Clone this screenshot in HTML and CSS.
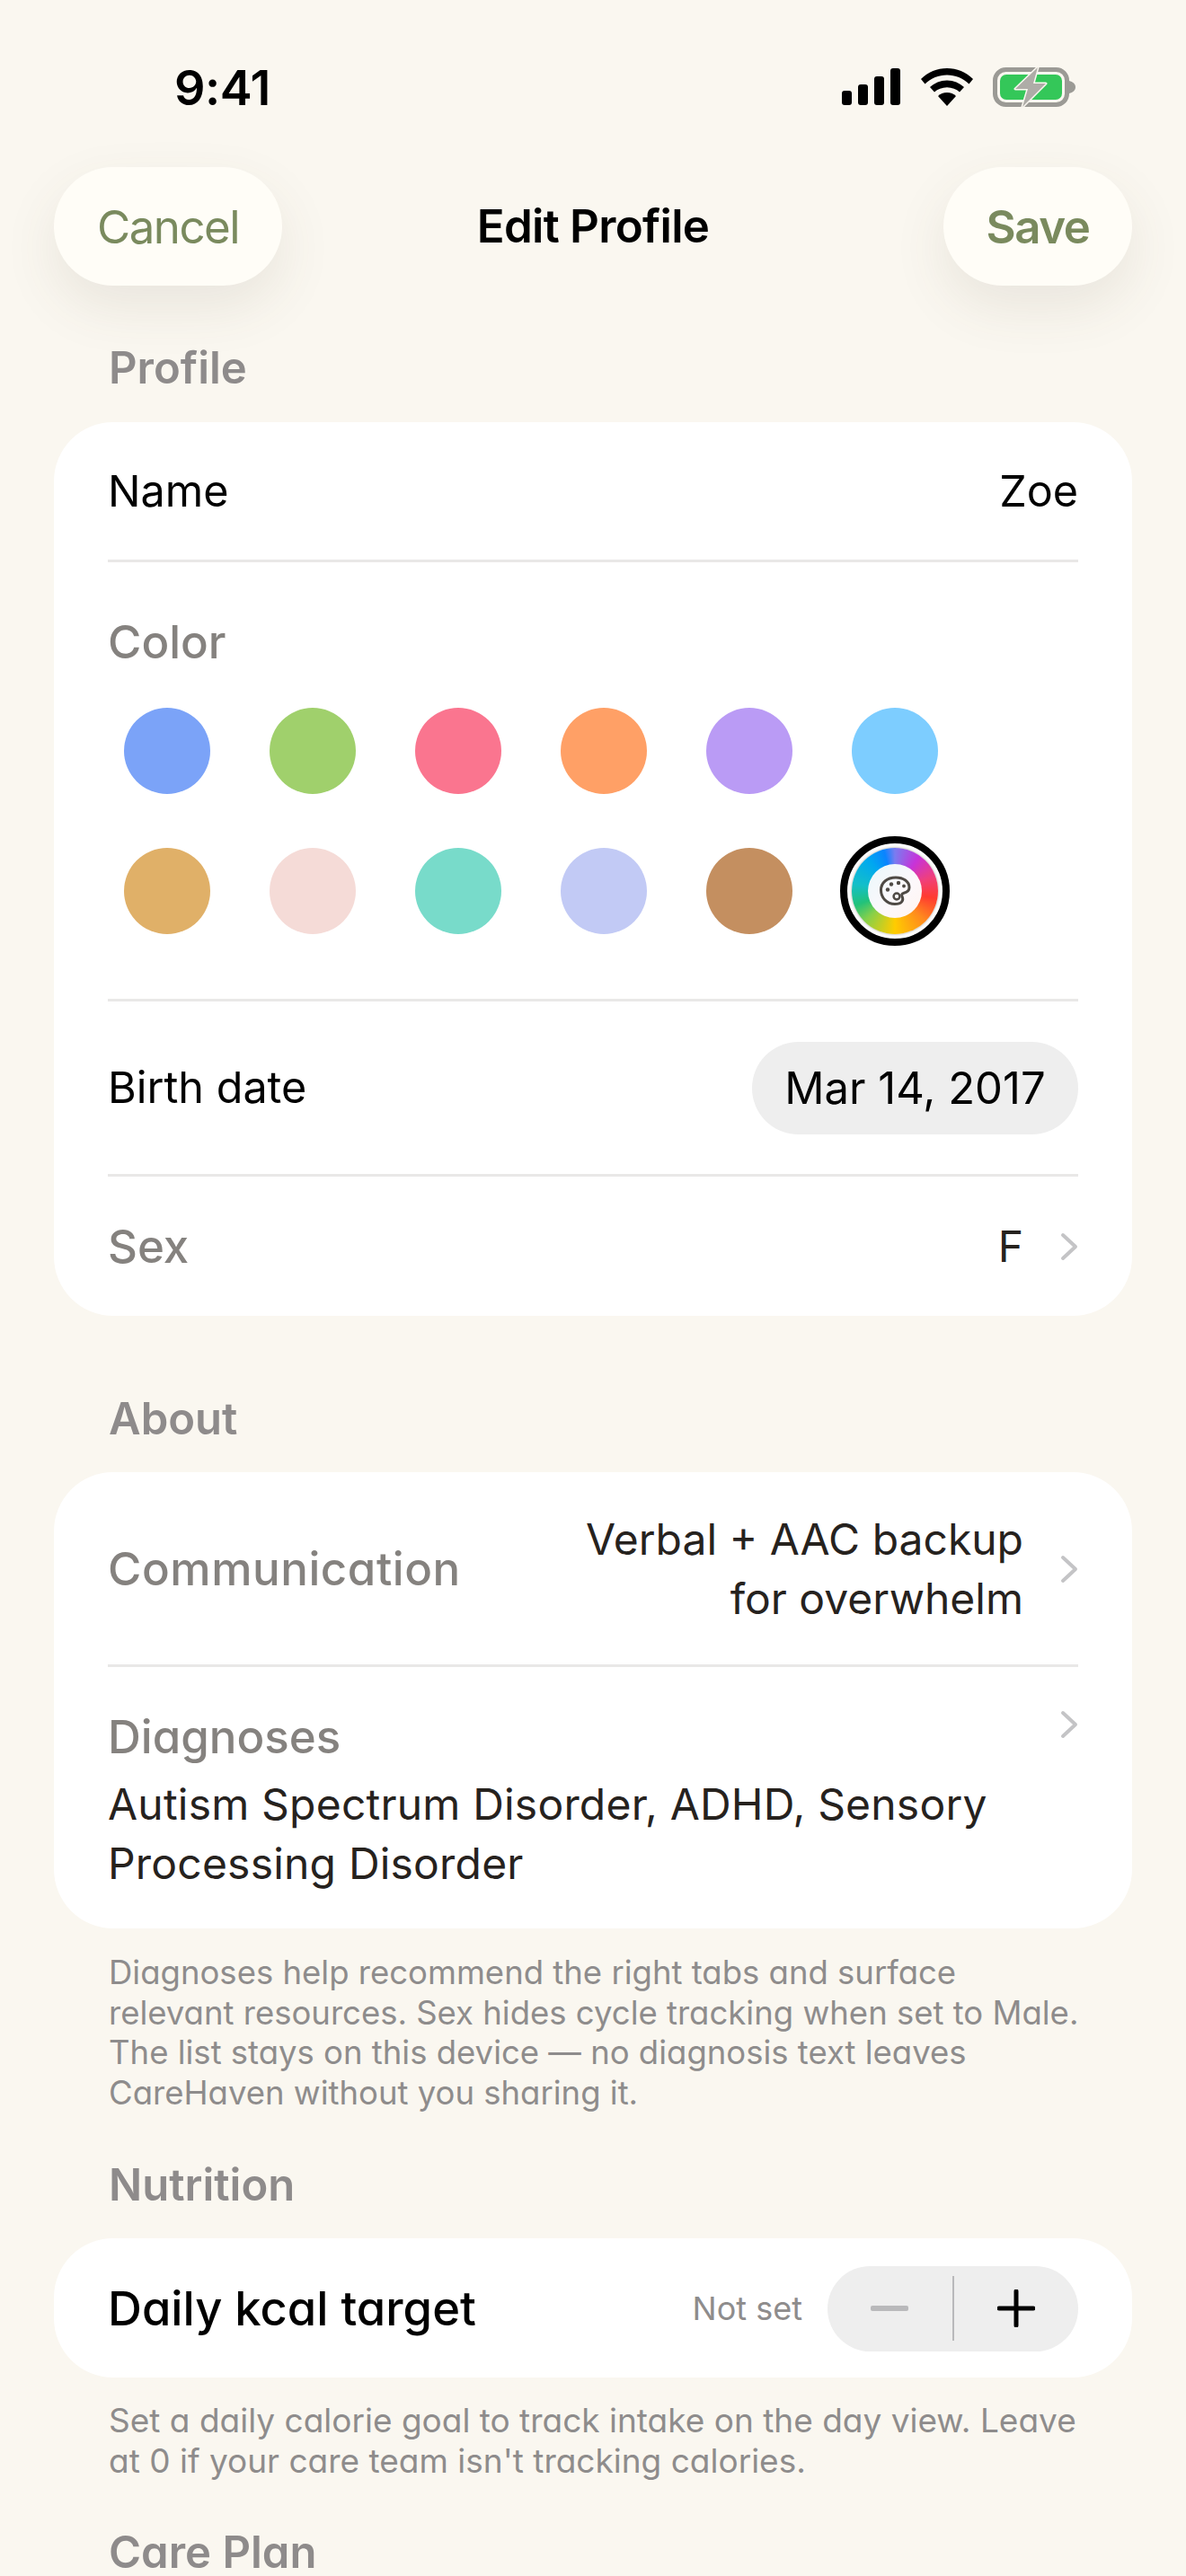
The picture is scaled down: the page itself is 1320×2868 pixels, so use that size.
FILE: index.html
```html
<!DOCTYPE html>
<html lang="en">
<head>
<meta charset="utf-8">
<title>Edit Profile</title>
<link rel="stylesheet" href="styles.css">
</head>
<body>
<main class="screen">
  <header class="status">
    <span class="time">9:41</span>
    <div class="status-icons">
      <svg class="signal" width="65" height="41" viewBox="0 0 65 41"><rect x="0" y="25" width="11" height="16" rx="3"/><rect x="18" y="18" width="11" height="23" rx="3"/><rect x="36" y="9" width="11" height="32" rx="3"/><rect x="54" y="0" width="11" height="41" rx="3"/></svg>
      <svg class="wifi" width="58" height="42" viewBox="0 0 58 42"><path d="M29 0C18 0 8 4 0 12l4.500 5.500C11 11 20 7.500 29 7.500S47 11 53.500 17.500L58 12C50 4 40 0 29 0z"/><path d="M29 13.500c-7.500 0-14 3-19 7.500l5 5.500c3.500-3.200 8.500-5.300 14-5.300s10.500 2.100 14 5.300l5-5.500c-5-4.500-11.500-7.500-19-7.500z"/><path d="M29 27c-4 0-7.500 1.500-10 4l10 11 10-11c-2.500-2.500-6-4-10-4z"/></svg>
      <svg class="battery" width="92" height="46" viewBox="0 0 92 46"><rect x="2.500" y="3.500" width="80" height="39" rx="12" fill="none" stroke="#9b9a95" stroke-width="5"/><rect x="8" y="9" width="69" height="28" rx="7" fill="#34c759"/><path d="M85 16c4 1 7 3.500 7 7s-3 6-7 7z" fill="#9b9a95"/><path d="M50 1 25 25h14l-6 20 26-26H45z" fill="#aeaca7" stroke="#faf7f0" stroke-width="3" stroke-linejoin="round" paint-order="stroke"/></svg>
    </div>
  </header>

  <nav class="nav">
    <button class="nav-btn nav-cancel">Cancel</button>
    <h1 class="nav-title">Edit Profile</h1>
    <button class="nav-btn nav-save">Save</button>
  </nav>

  <h2 class="section-label first">Profile</h2>
  <section class="card">
    <div class="row row-name">
      <span class="text-strong">Name</span>
      <span class="text-strong">Zoe</span>
    </div>
    <div class="color-block">
      <div class="label-round color-label">Color</div>
      <div class="swatches">
        <span class="swatch c1"></span><span class="swatch c2"></span><span class="swatch c3"></span><span class="swatch c4"></span><span class="swatch c5"></span><span class="swatch c6"></span>
        <span class="swatch c7"></span><span class="swatch c8"></span><span class="swatch c9"></span><span class="swatch c10"></span><span class="swatch c11"></span>
        <span class="swatch-custom">
          <span class="rainbow">
            <span class="rainbow-core">
              <svg width="36" height="36" viewBox="0 0 36 36" fill="none" stroke="#4f4a45" stroke-width="3"><path d="M2.500 17C2.500 9 9 3 19 3c8.500 0 15 4.500 15 11 0 4-3 5.500-6 6.200-2.500.6-2.800 2.200-1.800 4.300 1.500 3.500 0 8-8.200 8C8.500 32.500 2.500 25 2.500 17z"/><circle cx="20" cy="24" r="3.400" stroke-width="2.500"/><circle cx="10" cy="16.500" r="2.200" fill="#4f4a45" stroke="none"/><circle cx="14" cy="10.500" r="2.200" fill="#4f4a45" stroke="none"/><circle cx="22" cy="9" r="2.200" fill="#4f4a45" stroke="none"/><circle cx="28" cy="12.500" r="1.900" fill="#4f4a45" stroke="none"/></svg>
            </span>
          </span>
        </span>
      </div>
    </div>
    <div class="row row-birth">
      <span class="text-strong">Birth date</span>
      <span class="date-pill">Mar 14, 2017</span>
    </div>
    <div class="row row-sex">
      <span class="label-round">Sex</span>
      <span class="value-wrap">
        <span class="text-value">F</span>
        <svg class="chev" width="20" height="32" viewBox="0 0 20 32"><path d="M3 3l14 13L3 29"/></svg>
      </span>
    </div>
  </section>

  <h2 class="section-label about">About</h2>
  <section class="card">
    <div class="row row-comm">
      <span class="label-round label-wide">Communication</span>
      <span class="value-wrap">
        <span class="text-value multi">Verbal + AAC backup<br>for overwhelm</span>
        <svg class="chev" width="20" height="32" viewBox="0 0 20 32"><path d="M3 3l14 13L3 29"/></svg>
      </span>
    </div>
    <div class="diag">
      <div class="diag-head">
        <span class="label-round">Diagnoses</span>
        <svg class="chev" width="20" height="32" viewBox="0 0 20 32"><path d="M3 3l14 13L3 29"/></svg>
      </div>
      <p class="text-value diag-text">Autism Spectrum Disorder, ADHD, Sensory Processing Disorder</p>
    </div>
  </section>
  <p class="note note-about">Diagnoses help recommend the right tabs and surface<br>relevant resources. Sex hides cycle tracking when set to Male.<br>The list stays on this device — no diagnosis text leaves<br>CareHaven without you sharing it.</p>

  <h2 class="section-label tight">Nutrition</h2>
  <section class="card">
    <div class="row row-kcal">
      <span class="kcal-title">Daily kcal target</span>
      <div class="kcal-right">
        <span class="not-set">Not set</span>
        <div class="stepper">
          <span class="step"><svg width="42" height="42" viewBox="0 0 42 42"><rect x="0" y="18" width="42" height="6" rx="2" fill="#b9b9bb"/></svg></span>
          <span class="step-sep"></span>
          <span class="step"><svg width="42" height="42" viewBox="0 0 42 42"><path d="M21 2v38M2 21h38" stroke="#000" stroke-width="5" stroke-linecap="round" fill="none"/></svg></span>
        </div>
      </div>
    </div>
  </section>
  <p class="note note-kcal">Set a daily calorie goal to track intake on the day view. Leave at 0 if your care team isn't tracking calories.</p>

  <h2 class="section-label tight2">Care Plan</h2>
</main>
</body>
</html>
```

FILE: styles.css
```css
* { box-sizing: border-box; margin: 0; padding: 0; }
html, body { height: 2868px; overflow: hidden; }
body { background: #faf7f0; font-family: Inter, "Liberation Sans", sans-serif; color: #000; }
.screen { width: 1320px; height: 2868px; overflow: hidden; padding: 0 60px; }

.status { height: 186px; display: flex; justify-content: space-between; align-items: flex-start; padding: 66px 63px 0 134px; }
.time { font-size: 54px; font-weight: 600; line-height: 64px; letter-spacing: -.5px; }
.status-icons { display: flex; align-items: flex-start; gap: 23px; padding: 10px 0 0; }
.signal { fill: #000; }
.wifi { fill: #000; }
.battery { margin-top: -2px; margin-left: -1px; }

.nav { display: grid; grid-template-columns: 1fr auto 1fr; align-items: center; height: 132px; }
.nav-btn { height: 132px; border: 0; border-radius: 66px; background: #fffdf7; font: inherit; font-size: 51px; letter-spacing: -1.5px; padding: 0; box-shadow: 0 24px 60px rgba(90, 80, 60, .1); color: #7a8a5e; }
.nav-cancel { width: 254px; justify-self: start; }
.nav-save { width: 210px; font-weight: 600; justify-self: end; }
.nav-title { font-size: 51px; font-weight: 600; line-height: 60px; letter-spacing: -.7px; }

.section-label { height: 60px; line-height: 60px; font-size: 49px; font-weight: 600; color: #8e8b8b; padding-left: 61px; margin-top: 83px; margin-bottom: 31px; font-feature-settings: "cv11" 1; }
.section-label.first { margin-top: 62px; margin-bottom: 30px; }
.section-label.about { margin-top: 85px; margin-bottom: 29px; }
.section-label.tight { margin-top: 49px; margin-bottom: 29px; }
.section-label.tight2 { margin-top: 52px; margin-bottom: 0; height: 53px; line-height: 53px; }

.card { background: #fff; border-radius: 66px; padding: 0 60px; }
.row { display: flex; justify-content: space-between; align-items: center; border-bottom: 3px solid #e9e8e7; }
.row-name { height: 156px; padding-top: 1px; }
.row-birth { height: 195px; }
.row-sex, .row-kcal { border-bottom: 0; }
.row-sex { height: 155px; }
.text-strong { font-size: 48.500px; line-height: 60px; }
.text-value { font-size: 48px; line-height: 66px; color: #26221e; }
.label-round { font-size: 51px; line-height: 60px; font-weight: 500; color: #85827f; font-feature-settings: "cv11" 1; }
.label-wide { letter-spacing: .55px; }

.color-block { height: 489px; padding-top: 59px; border-bottom: 3px solid #e9e8e7; }
.swatches { display: grid; grid-template-columns: repeat(6, 96px); column-gap: 66px; row-gap: 60px; padding: 43px 0 0 18px; align-items: center; justify-items: center; }
.swatch { width: 96px; height: 96px; border-radius: 50%; display: block; }
.c1 { background: #7ba3f8; } .c2 { background: #a0d06c; } .c3 { background: #fa758f; }
.c4 { background: #ffa066; } .c5 { background: #ba9bf5; } .c6 { background: #7dcdff; }
.c7 { background: #e0b068; } .c8 { background: #f5dbd7; } .c9 { background: #78dbca; }
.c10 { background: #c2caf5; } .c11 { background: #c48f60; }
.swatch-custom { width: 122px; height: 122px; margin: -13px; border: 8px solid #000; border-radius: 50%; display: flex; align-items: center; justify-content: center; background: #fff; }
.rainbow { width: 96px; height: 96px; border-radius: 50%; display: flex; align-items: center; justify-content: center; box-shadow: 0 0 3px rgba(70, 60, 40, .5); background: conic-gradient(from 0deg, #7a7cf0, #c733d9 35deg, #f0407a 70deg, #ff3b30 100deg, #ff8a1e 135deg, #ffcc00 180deg, #86d04a 225deg, #22c27a 250deg, #14bfc8 280deg, #00a8f0 320deg, #0a84ff 345deg, #7a7cf0); }
.rainbow-core { width: 60px; height: 60px; border-radius: 50%; display: flex; align-items: center; justify-content: center; background: linear-gradient(135deg, #eaf8fb, #fdf8fb 60%, #fff4ef); }

.date-pill { height: 103px; width: 363px; border-radius: 52px; background: #eeeeee; font-size: 49px; display: flex; align-items: center; justify-content: center; }

.value-wrap { display: flex; align-items: center; gap: 41px; }
.chev { fill: none; stroke: #c4c4c6; stroke-width: 4; stroke-linecap: round; stroke-linejoin: round; flex: none; }
.multi { text-align: right; }

.row-comm { height: 217px; padding-top: 2px; }
.diag { height: 291px; padding-top: 48px; }
.diag-head { display: flex; justify-content: space-between; align-items: flex-start; height: 60px; }
.diag-text { margin-top: 12px; letter-spacing: .2px; }

.note { font-size: 37px; line-height: 44.7px; color: #8e8c8c; padding: 27px 45px 0 61px; font-feature-settings: "cv11" 1; }
.note-about { height: 207px; font-size: 36.500px; padding-right: 0; }
.note-kcal { padding-top: 26px; height: 116px; }

.row-kcal { height: 155px; padding-top: 1px; }
.kcal-title { font-size: 52.500px; font-weight: 500; line-height: 60px; font-feature-settings: "cv11" 1; }
.kcal-right { display: flex; align-items: center; gap: 28px; }
.not-set { font-size: 36px; color: #8e8c8c; font-feature-settings: "cv11" 1; }
.stepper { width: 279px; height: 95px; border-radius: 48px; background: #eeeeee; display: flex; align-items: center; }
.step { flex: 1; display: flex; align-items: center; justify-content: center; }
.step-sep { width: 2px; height: 72px; background: #b9b9bb; }
```
